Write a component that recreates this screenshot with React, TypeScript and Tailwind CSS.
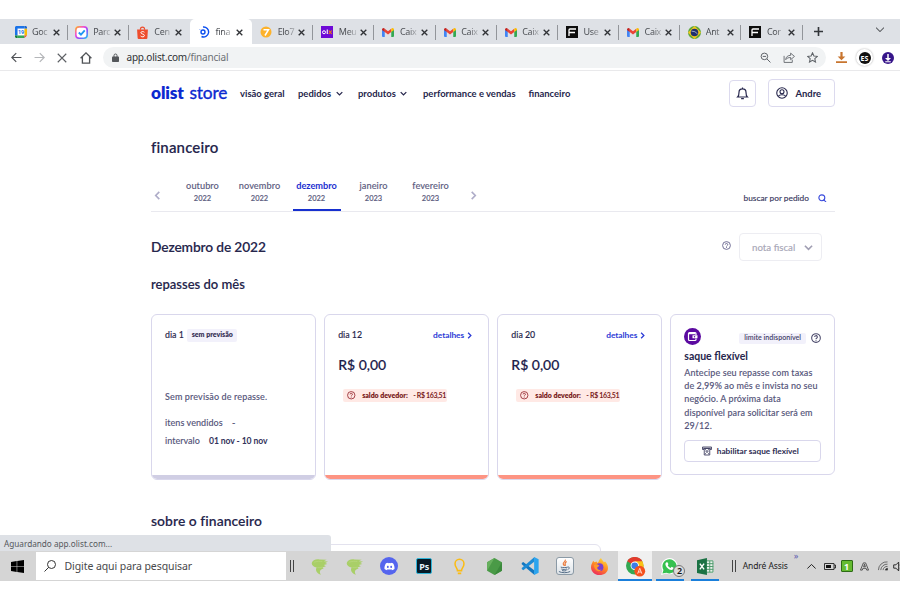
import React from 'react';
import { FaDiscord } from 'react-icons/fa';

/* ---------- favicons ---------- */

const Calendar = () => (
  <svg viewBox="0 0 24 24" className="size-3">
    <path fill="#fff" d="M5 5h14v14H5z" />
    <path fill="#1a73e8" d="M2 0h17v5H5v14H0V2z" />
    <path fill="#fbbc04" d="M19 5h5v14h-5z" />
    <path fill="#1967d2" d="M19 0h3l2 2v3h-5z" />
    <path fill="#34a853" d="M5 19h14v5H5z" />
    <path fill="#188038" d="M0 19h5v5H2l-2-2z" />
    <path fill="#ea4335" d="M19 19h5l-5 5z" />
    <text x="12" y="16" textAnchor="middle" fontSize="11" fontWeight="700" fill="#1a73e8" fontFamily="Roboto, sans-serif">19</text>
  </svg>
);

const Check = () => (
  <svg viewBox="0 0 24 24" className="size-[13px]">
    <defs>
      <linearGradient id="rainbow" x1="0" y1="0" x2="1" y2="1">
        <stop offset="0" stopColor="#ffb020" />
        <stop offset=".35" stopColor="#f04bd8" />
        <stop offset=".65" stopColor="#8b4bff" />
        <stop offset="1" stopColor="#22c7f2" />
      </linearGradient>
    </defs>
    <rect x="1.5" y="1.5" width="21" height="21" rx="6" fill="#fff" stroke="url(#rainbow)" strokeWidth="3" />
    <path d="M7 12l4 4 7-8" fill="none" stroke="#2196f3" strokeWidth="3.4" />
  </svg>
);

const Shopee = () => (
  <svg viewBox="0 0 24 24" className="size-[13px]">
    <path d="M8 7a4 5 0 0 1 8 0" fill="none" stroke="#ee4d2d" strokeWidth="2" />
    <path d="M2 6.500h20L21 22q0 2-2 2H5q-2 0-2-2z" fill="#ee4d2d" />
    <path d="M15.500 11.500c-2-2-6.500-1.500-6.500 1s6.500 2 6.500 5-4.500 3.500-7 1" fill="none" stroke="#fff" strokeWidth="1.800" />
  </svg>
);

const Olist = () => (
  <svg viewBox="0 0 24 24" className="size-3" fill="none" stroke="#0b4ef0">
    <path d="M10 2A10 10 0 1 1 7 21" strokeWidth="2.800" />
    <circle cx="10" cy="12" r="4" strokeWidth="2.800" />
    <path d="M3 8l1-1.500" strokeWidth="2" stroke="#6d95f7" />
  </svg>
);

const Elo = () => (
  <svg viewBox="0 0 24 24" className="size-3">
    <circle cx="12" cy="12" r="11" fill="#fdb22b" />
    <path d="M7 7.500h10L10 19" fill="none" stroke="#fff" strokeWidth="3" />
  </svg>
);

const Olx = () => (
  <svg viewBox="0 0 24 24" className="size-3">
    <path fill="#6e0ad6" d="M0 0h24v24H0z" />
    <circle cx="6" cy="12.500" r="3" fill="none" stroke="#fff" strokeWidth="2" />
    <path d="M12.500 7v9" stroke="#fff" strokeWidth="2.200" />
    <path d="M15.500 9l6 7m0-7l-6 7" stroke="#f28000" strokeWidth="2.200" />
  </svg>
);

const Gmail = () => (
  <svg viewBox="0 0 24 18" className="h-[9px] w-3">
    <path fill="#4285f4" d="M0 3l5.500 4v11H2q-2 0-2-2z" />
    <path fill="#34a853" d="M24 3l-5.500 4v11H22q2 0 2-2z" />
    <path fill="#ea4335" d="M5.500 1.500L12 6.500l6.500-5V8L12 13 5.500 8z" />
    <path fill="#c5221f" d="M0 3Q0 0 3 0q1.200 0 2.500 1.500V8L0 4z" />
    <path fill="#fbbc04" d="M24 3q0-3-3-3-1.200 0-2.500 1.500V8L24 4z" />
  </svg>
);

const Finder = () => (
  <svg viewBox="0 0 24 24" className="size-3">
    <path fill="#0d0d0d" d="M0 0h24v24H0z" />
    <path d="M6 20V8q0-2 2-2h12M6 13h12" fill="none" stroke="#fff" strokeWidth="2.600" />
  </svg>
);

const Brazil = () => (
  <svg viewBox="0 0 24 24" className="size-[13px]">
    <circle cx="12" cy="12" r="12" fill="#5da83a" />
    <path fill="#f4c61c" d="M12 0l12 12-12 12L0 12z" />
    <circle cx="12" cy="12" r="7" fill="#20306e" />
    <path d="M6.500 9.500q7-.5 11 5" fill="none" stroke="#c9d3e6" strokeWidth="1.300" />
  </svg>
);

const Close = ({ className }: { className: string }) => (
  <svg viewBox="0 0 10 10" className={className} fill="none" stroke="currentColor" strokeWidth="1.900">
    <path d="M1 1l8 8M9 1L1 9" />
  </svg>
);

const tabs: { icon: React.ReactNode; title: string; active?: boolean }[] = [
  { icon: <Calendar />, title: 'Goc' },
  { icon: <Check />, title: 'Parc' },
  { icon: <Shopee />, title: 'Cen' },
  { icon: <Olist />, title: 'fina', active: true },
  { icon: <Elo />, title: 'Elo7' },
  { icon: <Olx />, title: 'Meu' },
  { icon: <Gmail />, title: 'Caix' },
  { icon: <Gmail />, title: 'Caix' },
  { icon: <Gmail />, title: 'Caix' },
  { icon: <Finder />, title: 'Use' },
  { icon: <Gmail />, title: 'Caix' },
  { icon: <Brazil />, title: 'Ant' },
  { icon: <Finder />, title: 'Cor' },
];

function TabStrip() {
  return (
    <div className="flex h-[25px] shrink-0 items-center bg-[#dee1e6] pl-[6.500px] text-[9px] tracking-[-0.350px] text-[#4c4f54]">
      {tabs.map((t, i) => (
        <div
          key={i}
          className={
            'flex h-[25px] shrink-0 items-center pt-px pl-[7.500px] ' +
            (t.active ? 'w-[62.200px] rounded-t-[5px] bg-white' : 'w-[61.170px]')
          }
        >
          <span className="flex w-[13px] justify-center">{t.icon}</span>
          <span className="ml-[5px] w-[18px] whitespace-nowrap [mask-image:linear-gradient(to_right,#000_45%,rgba(0,0,0,0.15))]">
            {t.title}
          </span>
          <Close className="ml-[2.800px] size-[7px] text-[#303236]" />
          <span
            className={
              'ml-auto h-[15px] w-px ' + (t.active || tabs[i + 1]?.active ? 'bg-transparent' : 'bg-[#92959a]')
            }
          />
        </div>
      ))}
      <svg viewBox="0 0 10 10" className="ml-[11px] size-[9px]" stroke="#33363a" strokeWidth="1.800">
        <path d="M5 0v10M0 5h10" />
      </svg>
      <svg viewBox="0 0 10 6" className="mr-4 mb-[4px] ml-auto h-[5px] w-2" fill="none" stroke="#55585c" strokeWidth="1.300">
        <path d="M0 .5l5 5 5-5" />
      </svg>
    </div>
  );
}

function Toolbar() {
  return (
    <div className="flex h-[27px] shrink-0 items-center border-b border-[#e9e9eb] bg-white pt-px pl-[10.500px]">
      <svg viewBox="0 0 20 20" className="size-[11px]" fill="none" stroke="#505357" strokeWidth="2.200">
        <path d="M19 10H2M9.500 2L1.500 10l8 8" />
      </svg>
      <svg viewBox="0 0 20 20" className="ml-3 size-[11px]" fill="none" stroke="#b4b6b9" strokeWidth="2.200">
        <path d="M1 10h17M10.500 2l8 8-8 8" />
      </svg>
      <svg viewBox="0 0 20 20" className="ml-[12.500px] size-[10px]" fill="none" stroke="#5d6064" strokeWidth="2.200">
        <path d="M1.500 1.500l17 17M18.500 1.500l-17 17" />
      </svg>
      <svg viewBox="0 0 20 20" className="ml-[13px] size-3" fill="none" stroke="#505357" strokeWidth="2.200">
        <path d="M1 10.500L10 1.500l9 9M4 8.500v10h12v-10" />
      </svg>
      <div className="ml-[10.500px] flex h-[21px] w-[723px] items-center rounded-full bg-[#f1f3f4] pl-[9px]">
        <svg viewBox="0 0 14 18" className="h-[9px] w-[7px]">
          <path d="M4 8V5a3 3 0 0 1 6 0v3" fill="none" stroke="#54575b" strokeWidth="2" />
          <rect x="0" y="7" width="14" height="11" rx="1.500" fill="#54575b" />
        </svg>
        <span className="ml-2 text-[10px] tracking-[-0.200px] text-[#6d7074]">
          <span className="text-[#303236]">app.olist.com</span>/financial
        </span>
        <svg viewBox="0 0 20 20" className="ml-auto size-[11px]" fill="none" stroke="#5f6368" strokeWidth="1.800">
          <circle cx="8" cy="8" r="6" />
          <path d="M12.500 12.500L19 19M5 8h6" />
        </svg>
        <svg viewBox="0 0 22 20" className="ml-3 h-[11px] w-3" fill="none" stroke="#5f6368" strokeWidth="1.600">
          <path d="M2 7v12h15v-5M5 14c0-5 4-8 9-8V2l7 6-7 6v-4c-4 0-7 1-9 4z" />
        </svg>
        <svg viewBox="0 0 20 20" className="mr-2 ml-3 size-[11px]" fill="none" stroke="#5f6368" strokeWidth="1.900">
          <path d="M10 1.500l2.600 5.700 6.200.7-4.600 4.200 1.300 6.200L10 15.200l-5.500 3.100 1.300-6.200L1.200 7.900l6.200-.7z" />
        </svg>
      </div>
      <svg viewBox="0 0 20 20" className="ml-[10px] size-[11px]">
        <path d="M8 0h4v8h5l-7 7-7-7h5zM0 17h20v3H0z" fill="#c8752f" />
      </svg>
      <span className="ml-[9.500px] flex size-[17px] items-center justify-center rounded-full bg-white shadow-[0_0_2px_rgba(0,0,0,0.35)]">
        <span className="flex size-3 items-center justify-center rounded-full bg-[#111] pt-px text-[7px] leading-none font-bold text-white">
          ES
        </span>
      </span>
      <svg viewBox="0 0 24 24" className="ml-[8.500px] size-3">
        <circle cx="12" cy="12" r="12" fill="#37168a" />
        <path d="M10.500 4h3v8H18l-6 6-6-6h4.500zM6.500 18.500h11v2h-11z" fill="#fff" />
      </svg>
    </div>
  );
}

/* ---------- page ---------- */

const Chevron = ({ dir, className }: { dir: 'left' | 'right' | 'down'; className: string }) => (
  <svg viewBox="0 0 10 10" className={className} fill="none" stroke="currentColor" strokeWidth="1.800">
    <path d={dir === 'left' ? 'M7 1L3 5l4 4' : dir === 'right' ? 'M3 1l4 4-4 4' : 'M1 3l4 4 4-4'} />
  </svg>
);

const Help = ({ className }: { className: string }) => (
  <svg viewBox="0 0 20 20" className={className} fill="none" stroke="currentColor" strokeWidth="2.100">
    <circle cx="10" cy="10" r="8.700" />
    <path d="M7.300 8a2.700 2.700 0 1 1 3.900 2.400c-.9.500-1.200.9-1.200 1.800M10 13.600v1.800" />
  </svg>
);

function Header() {
  return (
    <header className="flex h-[44px] items-center text-[9.450px] font-bold text-[#26264c]">
      <span className="flex w-[89px] items-baseline text-[17.300px] leading-none text-[#0c29d0]">
        <span className="w-[38.500px] font-extrabold tracking-[-0.150px]">olist</span>
        <span className="font-normal tracking-[-0.150px] [-webkit-text-stroke:0.350px_#0c29d0]">store</span>
      </span>
      <nav className="flex items-center pt-[2px]">
        <span className="w-[58px]">visão geral</span>
        <span className="flex w-[60px] items-center">
          <span className="w-[38px]">pedidos</span>
          <Chevron dir="down" className="size-[7px]" />
        </span>
        <span className="flex w-[65px] items-center">
          <span className="w-[42px]">produtos</span>
          <Chevron dir="down" className="size-[7px]" />
        </span>
        <span className="w-[105.500px] whitespace-nowrap">performance e vendas</span>
        <span>financeiro</span>
      </nav>
      <span className="ml-auto flex size-[27px] items-center justify-center rounded-[4px] border border-[#dcdaee]">
        <svg viewBox="0 0 24 24" className="size-[13px]" fill="none" stroke="#26264c" strokeWidth="2.200">
          <path d="M3 18.500c2-2 2.500-4 2.500-8.500a6.500 6.500 0 0 1 13 0c0 4.500.5 6.500 2.500 8.500zM12 3V1M9.500 21.500h5" />
        </svg>
      </span>
      <span className="ml-[12.500px] flex h-7 w-[67px] items-center rounded-[4px] border border-[#dcdaee] pl-[7px]">
        <svg viewBox="0 0 24 24" className="size-3" fill="none" stroke="#26264c" strokeWidth="2.200">
          <circle cx="12" cy="12" r="10.500" />
          <circle cx="12" cy="9.500" r="4" />
          <path d="M4.500 18.500c3-4 12-4 15 0" />
        </svg>
        <span className="ml-[7.500px] pt-[2px]">Andre</span>
      </span>
    </header>
  );
}

const months = [
  ['outubro', '2022'],
  ['novembro', '2022'],
  ['dezembro', '2022'],
  ['janeiro', '2023'],
  ['fevereiro', '2023'],
];

function MonthBar() {
  return (
    <div className="flex h-[36px] border-b border-[#e9e9ef] text-[#5c5c80]">
      <Chevron dir="left" className="mt-[15px] ml-[2px] size-[9px] text-[#aeacc8]" />
      <div className="ml-[12px] flex">
        {months.map(([m, y]) => (
          <div key={m} className="flex w-[57px] justify-center">
            <div
              className={
                'flex h-[35px] w-[48px] flex-col items-center pt-[3px] ' +
                (m === 'dezembro' ? 'border-b-2 border-[#1730cf]' : '')
              }
            >
              <span
                className={
                  'text-[9.200px] leading-[13px] ' +
                  (m === 'dezembro'
                    ? 'font-bold text-[#1c2fd0]'
                    : 'font-medium tracking-[0.050px] [-webkit-text-stroke:0.100px_#5c5c80]')
                }
              >
                {m}
              </span>
              <span className="pt-px text-[7.500px] leading-[11px] font-medium [-webkit-text-stroke:0.150px_#5c5c80]">{y}</span>
            </div>
          </div>
        ))}
      </div>
      <Chevron dir="right" className="mt-[15px] ml-[10px] size-[9px] text-[#aeacc8]" />
      <div className="mt-[15px] mr-[8.500px] ml-auto flex h-[14px] items-center">
        <span className="text-[8.300px] font-medium text-[#3c3c62] [-webkit-text-stroke:0.100px_#3c3c62]">
          buscar por pedido
        </span>
        <svg viewBox="0 0 20 20" className="ml-[9px] size-[8.500px]" fill="none" stroke="#3a4bdc" strokeWidth="2.600">
          <circle cx="9" cy="9" r="7" />
          <path d="M13 13l6 6" />
        </svg>
      </div>
    </div>
  );
}

function DebtCard({ day }: { day: string }) {
  return (
    <div className="flex h-[166px] w-[164.500px] flex-col overflow-hidden rounded-[6px] border border-[#d9d7ec]">
      <div className="flex flex-1 flex-col px-[13px] pt-[13px]">
        <div className="flex h-[14px] items-center text-[8.800px] text-[#26264c]">
          <span className="font-medium [-webkit-text-stroke:0.100px_#26264c]">{day}</span>
          <span className="ml-auto text-[8.400px] font-bold tracking-[-0.050px] text-[#2c3cd6]">detalhes</span>
          <Chevron dir="right" className="mr-[1.500px] ml-[2px] size-[7px] text-[#2c3cd6]" />
        </div>
        <div className="mt-[13px] h-[20px] text-[14px] leading-[20px] font-medium text-[#20204a] [-webkit-text-stroke:0.150px_#20204a]">
          R$ 0,00
        </div>
        <div className="mt-[14px] ml-[5px] flex h-[13px] w-[104px] items-center rounded-[2px] bg-[#ffe9e5] pl-[4px] text-[7px] whitespace-nowrap text-[#7a1c22]">
          <Help className="size-[8.500px] text-[#9b3038]" />
          <span className="ml-[6.500px] w-[51px] font-extrabold tracking-[-0.030px]">saldo devedor:</span>
          <span className="font-bold tracking-[-0.330px]">- R$ 163,51</span>
        </div>
      </div>
      <div className="h-[4.500px] bg-[#fd9483]" />
    </div>
  );
}

function NoForecastCard() {
  return (
    <div className="flex h-[166px] w-[164.500px] flex-col overflow-hidden rounded-[6px] border border-[#d9d7ec]">
      <div className="flex flex-1 flex-col px-[13px] pt-[13px] text-[9px] text-[#55557a]">
        <div className="flex h-[14px] items-center">
          <span className="text-[8.800px] font-medium text-[#26264c] [-webkit-text-stroke:0.100px_#26264c]">dia 1</span>
          <span className="ml-[3.500px] flex h-[13px] w-[50px] items-center justify-center rounded-[2px] bg-[#f2f1fb] pb-px text-[7px] font-extrabold whitespace-nowrap text-[#3b3558]">
            sem previsão
          </span>
        </div>
        <div className="mt-[48px] leading-[14px] font-medium tracking-[0.130px] [-webkit-text-stroke:0.100px_#55557a]">
          Sem previsão de repasse.
        </div>
        <div className="mt-[12px] flex leading-[13px] font-medium [-webkit-text-stroke:0.100px_#55557a]">
          <span className="w-[67px] tracking-[0.060px]">itens vendidos</span>
          <span>-</span>
        </div>
        <div className="mt-[5px] flex items-baseline leading-[13px] font-medium">
          <span className="w-[44px] [-webkit-text-stroke:0.100px_#55557a]">intervalo</span>
          <span className="text-[8.600px] font-bold tracking-[-0.080px] whitespace-nowrap text-[#34345c]">
            01 nov - 10 nov
          </span>
        </div>
      </div>
      <div className="h-[4.500px] bg-[#d0cee4]" />
    </div>
  );
}

function FlexCard() {
  return (
    <div className="flex h-[161px] w-[164.500px] flex-col rounded-[6px] border border-[#d9d7ec] px-[12.800px] pt-[13px]">
      <div className="flex h-[17px]">
        <svg viewBox="0 0 34 34" className="size-[17px]">
          <circle cx="17" cy="17" r="17" fill="#5b0aa0" />
          <path d="M24 14v-3q0-2-2-2H11q-2 0-2 2v12q0 2 2 2h11q2 0 2-2v-2" fill="none" stroke="#fff" strokeWidth="2.400" />
          <path d="M10 9.500h13v3H10z" fill="#fff" />
          <path d="M17 14.500h10v6H17z" fill="#fff" />
          <circle cx="21" cy="17.500" r="1.500" fill="#5b0aa0" />
        </svg>
        <span className="mt-[5px] ml-auto flex h-[11px] w-[67px] items-center justify-center rounded-[2px] bg-[#f2f1fb] text-[7.100px] font-semibold whitespace-nowrap text-[#454168]">
          limite indisponível
        </span>
        <Help className="mt-[5px] ml-[5px] size-[10px] text-[#4b4a6c]" />
      </div>
      <div className="mt-[5px] text-[10.500px] leading-[13px] font-bold text-[#26264c]">saque flexível</div>
      <p className="mt-[3px] text-[9px] leading-[13.200px] font-medium tracking-[0.080px] whitespace-nowrap text-[#55557a] [-webkit-text-stroke:0.100px_#55557a]">
        Antecipe seu repasse com taxas
        <br />
        de 2,99% ao mês e invista no seu
        <br />
        negócio. A próxima data
        <br />
        disponível para solicitar será em
        <br />
        29/12.
      </p>
      <div className="mt-[8px] flex h-[22px] w-[137px] shrink-0 items-center rounded-[4px] border border-[#d9d7ec] pl-[17px] text-[8.250px] font-bold whitespace-nowrap text-[#2c2c52]">
        <svg viewBox="0 0 20 20" className="size-[10px]" fill="none" stroke="#3a3a5c" strokeWidth="1.700">
          <path d="M4 7H1V2h18v5h-3M4.500 5v13h11V5zM2 4.500h16" />
          <circle cx="10" cy="11" r="1.800" />
          <path d="M6 15.500h2M12 15.500h2M6 7.500h2M12 7.500h2" />
        </svg>
        <span className="ml-[4.500px]">habilitar saque flexível</span>
      </div>
    </div>
  );
}

function Page() {
  return (
    <main className="relative h-[480px] shrink-0 overflow-hidden bg-white font-[Lato,'Noto_Sans',sans-serif]">
      <div className="ml-[151px] flex w-[684px] flex-col">
        <Header />
        <h1 className="mt-[22px] text-[15px] leading-5 font-semibold tracking-[0.150px] text-[#26264c] [-webkit-text-stroke:0.100px_#26264c]">
          financeiro
        </h1>
        <div className="mt-[19px]">
          <MonthBar />
        </div>
        <div className="mt-[21px] flex h-7 items-center pr-[13px]">
          <h2 className="pt-px text-[13.800px] font-semibold tracking-[-0.150px] text-[#26264c] [-webkit-text-stroke:0.100px_#26264c]">
            Dezembro de 2022
          </h2>
          <Help className="mb-[4px] ml-auto size-[9px] text-[#6a6890]" />
          <span className="ml-[8px] flex h-7 w-[83px] items-center rounded-[4px] border border-[#ededf2] pl-[12px] text-[9.700px] font-medium text-[#a9a8b8] [-webkit-text-stroke:0.100px_#a9a8b8]">
            nota fiscal
            <Chevron dir="down" className="ml-[9px] size-[9px] text-[#a09eb2]" />
          </span>
        </div>
        <h3 className="mt-[13px] text-[13px] leading-5 font-semibold text-[#26264c] [-webkit-text-stroke:0.100px_#26264c]">
          repasses do mês
        </h3>
        <div className="mt-[20px] flex h-[166px] items-start justify-between">
          <NoForecastCard />
          <DebtCard day="dia 12" />
          <DebtCard day="dia 20" />
          <FlexCard />
        </div>
        <h3 className="mt-[31px] text-[13.900px] leading-5 font-semibold tracking-[0.050px] text-[#26264c] [-webkit-text-stroke:0.100px_#26264c]">
          sobre o financeiro
        </h3>
        <div className="mt-[13px] h-5 w-[450px] rounded-t-[6px] border border-[#e3e2ee]" />
      </div>
      <div className="absolute bottom-0 left-0 flex h-4 w-[331px] items-center rounded-tr-[3px] bg-[#dee1e6] pt-[2px] pl-[4px] font-['Noto_Sans',sans-serif] text-[8.200px] text-[#55585d]">
        Aguardando app.olist.com...
      </div>
    </main>
  );
}

/* ---------- taskbar ---------- */

const Swirl = () => (
  <svg viewBox="0 0 24 24" className="size-[17px]">
    <path
      fill="#a9cf68"
      d="M1 7c1-4 6-6 11-5l10 .5-4 2 6 .5-4 2 3 1.500-5 1.500 3 1.500-5 2 2 1-4 2c-2 2-2 4 0 7-4-1-7-4-7-7 0-1 .5-2 1-3-4-.5-7-3-7-6.500z"
    />
    <path d="M4 6c4-1.500 9-1.500 12-1M9 13.500q4 .5 7-.5" stroke="#b9d880" fill="none" />
  </svg>
);

const Discord = () => (
  <span className="flex size-[18px] items-center justify-center rounded-full bg-[#5565ee]">
    <FaDiscord className="size-[11px] text-white" />
  </span>
);

const Photoshop = () => (
  <span className="flex size-4 items-center justify-center rounded-[2px] border border-[#31b4d8] bg-[#061a26] text-[9px] leading-none font-bold text-[#e4f6fd]">
    Ps
  </span>
);

const Keep = () => (
  <svg viewBox="0 0 16 24" className="h-[17px] w-[11px]" fill="none" stroke="#fbbc14" strokeWidth="2.200">
    <path d="M5 18c0-4-3.500-5-3.500-10a6.500 6.500 0 0 1 13 0c0 5-3.500 6-3.500 10zM5.500 22h5" />
  </svg>
);

const Hexagon = () => (
  <svg viewBox="0 0 24 24" className="size-[17px]">
    <path fill="#4a9a47" d="M12 0l10.500 6v12L12 24 1.500 18V6z" />
    <path fill="#67b05e" d="M12 0L1.500 6v12z" />
    <path fill="#3b8a3c" d="M22.500 6v12L12 24z" />
  </svg>
);

const VsCode = () => (
  <svg viewBox="0 0 24 24" className="size-[18px]">
    <path fill="#1377c0" d="M1 8l2-1.500L18 18v6L1 9.500z" />
    <path fill="#1c8bd6" d="M1 16l2 1.500L18 6V0L1 14.500z" />
    <path fill="#2ba4ee" d="M17.500 0L23.500 3v18l-6 3z" />
  </svg>
);

const Java = () => (
  <span className="flex h-[18px] w-[18px] items-center justify-center rounded-[3px] border border-[#8b9aa6] bg-gradient-to-b from-white to-[#dde3e8]">
    <svg viewBox="0 0 24 24" className="size-[15px]" fill="none">
      <path d="M13 1c2 3-4 4-3 7 .5 1.500 1.500 2 1.500 3M15.500 4c-4 2-3 4-2 7" stroke="#ea7a3b" strokeWidth="1.900" />
      <path d="M6 13c3 1 8 1 11 0M7 16c3 1 6 1 9 0M8 18.500c2 .8 5 .8 7 0M3 20c4 2.500 14 2.500 18 0M17 13c4-1 3 3 0 4" stroke="#587089" strokeWidth="1.600" />
    </svg>
  </span>
);

const Firefox = () => (
  <svg viewBox="0 0 24 24" className="size-[17px]">
    <defs>
      <linearGradient id="fox" x1=".8" y1="0" x2=".3" y2="1">
        <stop offset="0" stopColor="#ffe13a" />
        <stop offset=".5" stopColor="#ff8a24" />
        <stop offset="1" stopColor="#ee2b5b" />
      </linearGradient>
    </defs>
    <path
      fill="url(#fox)"
      d="M3 4l2 2 3-1 1 2c2-1 2-2 2-3 1-2 3-4 3-4 1 3 4 4 4 6l2-1c2 2 4 5 4 9 0 6-5 10-12 10S0 19 0 13c0-4 2-6 3-9z"
    />
    <circle cx="12" cy="13" r="5.500" fill="#7a3fd0" />
    <path fill="#ff9a28" d="M4 10c3-2 6-1 8 1l-3 2c-1 3 3 5 6 3-3 5-10 3-11-6z" />
  </svg>
);

const Chrome = () => (
  <svg viewBox="0 0 24 24" className="mt-[2px] ml-[2px] size-[20px]">
    <circle cx="10.500" cy="10.500" r="10.500" fill="#33a853" />
    <path fill="#e33b2e" d="M10.500 10.500L1.400 5.200a10.500 10.500 0 0 1 18.200 0z" />
    <path fill="#fbc116" d="M10.500 5.200h9.100A10.500 10.500 0 0 1 10.500 21l4.600-8z" />
    <circle cx="10.500" cy="10.500" r="5" fill="#fff" />
    <circle cx="10.500" cy="10.500" r="4" fill="#3b7de8" />
    <circle cx="16.500" cy="17" r="6.500" fill="#f4511e" />
    <path d="M14 20l2.500-6.500L19 20M15 18h3" fill="none" stroke="#ffd9cc" strokeWidth="1.200" />
  </svg>
);

const WhatsApp = () => (
  <span className="relative flex">
    <svg viewBox="0 0 24 24" className="size-[17px]">
      <path fill="#fff" d="M0 24l2-6.500A11.500 11.500 0 1 1 7 22z" />
      <path fill="#36c150" d="M2 22l1.500-5A10 10 0 1 1 7.500 20.700z" />
      <path
        fill="#fff"
        d="M8 6l1.500.2 1 2.600-1 1.400c1 2 2.200 3 4 3.800l1.500-1.500 2.700 1.300c.2 2-1.400 3-3 3-4 0-8-4.500-8.500-8C6.200 7.500 7 6 8 6z"
      />
    </svg>
    <span className="absolute top-[7px] left-[12px] flex size-3 items-center justify-center rounded-full border border-[#777] bg-[#dcdcdc] text-[9px] leading-none font-semibold text-[#111]">
      2
    </span>
  </span>
);

const Excel = () => (
  <svg viewBox="0 0 24 24" className="size-[17px]">
    <path fill="#e8f1ea" d="M13 3h10v18H13z" />
    <path d="M13 4h9.500v16H13M13 8h10M13 12h10M13 16h10M18 4v16" stroke="#4f9a6c" strokeWidth="1.400" fill="none" />
    <path fill="#1b7244" d="M0 3l14-3v24L0 21z" />
    <path d="M4 8l6 8M10 8l-6 8" stroke="#fff" strokeWidth="2" />
  </svg>
);

const apps: { icon: React.ReactNode; state?: 'open' | 'focused' }[] = [
  { icon: <Swirl /> },
  { icon: <Swirl /> },
  { icon: <Discord /> },
  { icon: <Photoshop /> },
  { icon: <Keep /> },
  { icon: <Hexagon /> },
  { icon: <VsCode /> },
  { icon: <Java /> },
  { icon: <Firefox /> },
  { icon: <Chrome />, state: 'focused' },
  { icon: <WhatsApp />, state: 'open' },
  { icon: <Excel />, state: 'open' },
];

const Grip = () => <span className="h-3 w-[4px] border-x border-[#444]" />;

function Taskbar() {
  return (
    <div className="flex h-[30px] shrink-0 items-center bg-[#d5d5d5] [&>*]:shrink-0">
      <svg viewBox="0 0 24 24" className="ml-[11px] size-[13px]">
        <path d="M0 3.500L10.500 2v9.500H0zM11.500 1.800L24 0v11.500H11.500zM0 12.500h10.500V22L0 20.500zM11.500 12.500H24V24l-12.500-1.800z" />
      </svg>
      <div className="ml-3 flex h-7 w-[250px] items-center bg-white pl-2">
        <svg viewBox="0 0 24 24" className="size-3" fill="none" stroke="#333" strokeWidth="2">
          <circle cx="15" cy="9" r="8" />
          <path d="M9.500 14.500L1 23" />
        </svg>
        <span className="ml-[8.500px] pt-px text-[10.500px] tracking-[-0.080px] text-[#48494b]">
          Digite aqui para pesquisar
        </span>
      </div>
      <span className="ml-[4px] flex">
        <Grip />
      </span>
      <div className="ml-[7.500px] flex h-[30px]">
        {apps.map((a, i) => (
          <div key={i} className="flex w-[35.100px] justify-center">
            <div
              className={
                'flex h-[30px] items-center justify-center border-b-2 pt-[2px] ' +
                (a.state === 'focused'
                  ? 'w-[34px] border-[#1a7fdb] bg-[#f0f0f0]'
                  : a.state === 'open'
                    ? 'w-7 border-[#1a7fdb]'
                    : 'w-7 border-transparent')
              }
            >
              {a.icon}
            </div>
          </div>
        ))}
      </div>
      <span className="ml-[9px] flex">
        <Grip />
      </span>
      <span className="ml-[7px] w-[51px] text-[8.500px] tracking-[-0.080px] whitespace-nowrap text-[#222]">
        André Assis
      </span>
      <span className="mb-[22px] w-[8px] text-[9px] leading-none text-[#5a5ab0]">»</span>
      <svg viewBox="0 0 10 6" className="ml-[5.500px] h-[5px] w-[9px]" fill="none" stroke="#222" strokeWidth="1.200">
        <path d="M0 5.500l5-5 5 5" />
      </svg>
      <svg viewBox="0 0 24 14" className="ml-[7.500px] h-[7px] w-3">
        <path d="M1 1h19v12H1zM20 4h3v6h-3" fill="none" stroke="#222" strokeWidth="1.800" />
        <path d="M4 4h10v6H4z" fill="#111" />
      </svg>
      <span className="ml-[5px] flex size-3 items-center justify-center rounded-[1px] border border-[#2d6b16] bg-[#65bb32] text-[9px] leading-none font-bold text-white">
        1
      </span>
      <svg viewBox="0 0 20 20" className="ml-[7px] size-[9px]" fill="none" stroke="#333" strokeWidth="1.700">
        <path d="M1 18L7.500 2h5L19 18h-4l-1.500-4h-7L5 18zM8 10.500h4L10 5z" />
      </svg>
      <svg viewBox="0 0 22 20" className="ml-[9px] h-[10px] w-[10px]" fill="none" stroke="#444" strokeWidth="1.600">
        <path d="M1 19A18 18 0 0 1 21 1M6 19A14 14 0 0 1 21 6M11 19A9 9 0 0 1 21 11" />
        <path d="M16 19a5 5 0 0 1 5-4v4z" fill="#222" />
      </svg>
      <svg viewBox="0 0 14 20" className="ml-[5px] h-[11px] w-[8px]" fill="none" stroke="#222" strokeWidth="1.700">
        <path d="M1 7h4l5-5v16l-5-5H1zM13 6v3M13 12v3" />
      </svg>
    </div>
  );
}

export default function App() {
  return (
    <div className="flex h-[600px] w-[900px] flex-col overflow-hidden bg-white pt-[19px] font-['Noto_Sans','Open_Sans',sans-serif]">
      <TabStrip />
      <Toolbar />
      <Page />
      <Taskbar />
    </div>
  );
}
